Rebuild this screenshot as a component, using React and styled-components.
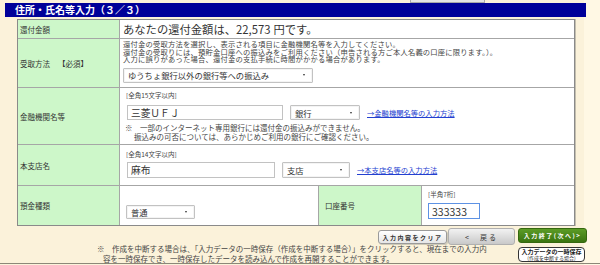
import React from 'react';
import styled, { createGlobalStyle } from 'styled-components';

const Global = createGlobalStyle`
  html, body { margin: 0; padding: 0; }
  body {
    width: 600px;
    height: 265px;
    overflow: hidden;
    background: linear-gradient(to right, #fbf2da 0, #fbf2da 584px, #fff8e4 584px);
    font-family: "Noto Sans CJK JP", "Noto Sans", sans-serif;
    color: #333;
  }
`;

const Page = styled.div`
  width: 600px;
  height: 264px;
  box-sizing: border-box;
  border-bottom: 1px solid #8c8878;
  display: flex;
  flex-direction: column;
`;

const TopStrip = styled.div`
  height: 3px;
  display: flex;
`;

const CutButton = styled.div`
  margin-left: 410px;
  width: 75px;
  height: 3px;
  box-sizing: border-box;
  background: #e4e4e4;
  border: 1px solid #a8a8a8;
  border-top: none;
`;

const TitleBar = styled.div`
  margin-left: 5px;
  width: 581px;
  height: 14px;
  box-sizing: border-box;
  padding-left: 10px;
  background: #000099;
  color: #fff;
  font-size: 10px;
  font-weight: bold;
  line-height: 14px;
  white-space: nowrap;
`;

const Table = styled.div`
  margin-top: 2px;
  margin-left: 17px;
  width: 558px;
  box-sizing: border-box;
  border: 1px solid #8a8a8a;
  box-shadow: 1px 0 0 #c4bfae;
  background: #fff;
  display: flex;
  flex-direction: column;
`;

const Row = styled.div`
  display: flex;
  height: ${p => p.$h}px;
  box-sizing: border-box;
  border-bottom: ${p => (p.$last ? 'none' : '1px solid #a6a6a6')};
`;

const Label = styled.div`
  width: ${p => p.$w || 102}px;
  flex: none;
  box-sizing: border-box;
  border-right: 1px solid #a6a6a6;
  background: #cdf7c9;
  display: flex;
  align-items: center;
  padding-left: ${p => p.$pl || 2}px;
  font-size: 7.5px;
  line-height: 9px;
  white-space: nowrap;
  color: #333;
`;

const Required = styled.span`
  margin-left: 8px;
`;

const Cell = styled.div`
  flex: ${p => (p.$w ? 'none' : '1')};
  width: ${p => (p.$w ? `${p.$w}px` : 'auto')};
  box-sizing: border-box;
  border-right: ${p => (p.$divider ? '1px solid #a6a6a6' : 'none')};
  padding-left: ${p => p.$pl ?? 3}px;
  padding-top: ${p => p.$pt ?? 0}px;
  display: flex;
  flex-direction: column;
  justify-content: ${p => (p.$center ? 'center' : 'flex-start')};
  align-items: flex-start;
`;

const Amount = styled.div`
  font-size: 11.3px;
  line-height: 14px;
  color: #333;
  white-space: nowrap;
`;

const Yen = styled.span`
  margin-left: 3px;
`;

const Desc = styled.div`
  font-size: 7.3px;
  line-height: 7.5px;
  height: 7.5px;
  color: #444;
  white-space: nowrap;
  letter-spacing: 0.2px;
`;

const Hint = styled.div`
  font-size: 6.5px;
  line-height: 8px;
  color: #444;
  margin-left: ${p => p.$ml || 0}px;
  white-space: nowrap;
`;

const Line = styled.div`
  display: flex;
  align-items: center;
  margin-top: ${p => p.$mt || 0}px;
  margin-left: ${p => p.$ml || 0}px;
`;

const SelectBox = styled.div`
  position: relative;
  flex: none;
  width: ${p => p.$w}px;
  height: ${p => p.$h || 15}px;
  margin-left: ${p => p.$ml || 0}px;
  margin-top: ${p => p.$mt || 0}px;
  box-sizing: border-box;
  border: 1px solid #c2c2c2;
  border-radius: 1px;
  background: #fff;
  padding-left: 4px;
  display: flex;
  align-items: center;
  font-size: 8.3px;
  color: #333;
  white-space: nowrap;
  box-shadow: inset 0 0 0 1px #f4f4f4;
`;

const Arrow = styled.span`
  position: absolute;
  right: 7px;
  top: 50%;
  transform: translateY(-50%);
  width: 0;
  height: 0;
  border-left: 1.6px solid transparent;
  border-right: 1.6px solid transparent;
  border-top: 2.6px solid #333;
`;

const TextInput = styled.input`
  width: ${p => p.$w}px;
  height: ${p => p.$h || 15}px;
  box-sizing: border-box;
  margin: 0;
  margin-top: ${p => p.$mt || 0}px;
  padding: 0 3px;
  border: 1px solid ${p => (p.$focus ? '#5d92e4' : '#c2c2c2')};
  background: #fff;
  font-family: "Noto Sans CJK JP", sans-serif;
  font-size: ${p => p.$fs || 9.7}px;
  color: #333;
  outline: none;
`;

const Link = styled.a`
  margin-left: 7px;
  font-size: 7.3px;
  color: #2340d0;
  text-decoration: underline;
  white-space: nowrap;
`;

const Note = styled.div`
  font-size: 7.5px;
  line-height: 9px;
  color: #444;
  white-space: nowrap;
  margin-top: ${p => p.$mt || 0}px;
  padding-left: ${p => p.$pl || 0}px;
`;

const ButtonRow = styled.div`
  display: flex;
  justify-content: flex-end;
  align-items: flex-start;
  height: 17px;
  margin-top: 2px;
  padding-right: 13px;
`;

const Btn = styled.div`
  width: ${p => p.$w}px;
  height: ${p => p.$h}px;
  margin-top: ${p => p.$mt || 0}px;
  margin-left: ${p => p.$ml || 0}px;
  box-sizing: border-box;
  display: flex;
  align-items: center;
  justify-content: center;
  border-radius: 3px;
  font-size: 6px;
  font-weight: bold;
  letter-spacing: 1.5px;
  white-space: nowrap;
  ${p =>
    p.$kind === 'clear' &&
    `background: linear-gradient(#ffffff, #e6e6e6);
     border: 1px solid #9a9a9a;
     color: #333;
     box-shadow: 1px 1px 0 #cfcab8;`}
  ${p =>
    p.$kind === 'back' &&
    `background: linear-gradient(#f2f2f2, #c9c9c9);
     border: 1px solid #b0b0b0;
     color: #333;
     font-weight: normal;
     font-size: 7px;
     letter-spacing: 2px;`}
  ${p =>
    p.$kind === 'next' &&
    `background: linear-gradient(#5c9c26, #3a7410);
     border: 1px solid #35680f;
     color: #fff;`}
`;

const BottomRow = styled.div`
  display: flex;
  align-items: flex-start;
  height: 18px;
  padding-right: 15px;
`;

const FooterNote = styled.div`
  margin-left: 103px;
  margin-top: -1px;
  text-indent: -6px;
  font-size: 7.5px;
  line-height: 9.5px;
  color: #444;
  white-space: nowrap;
`;

const SaveBtn = styled.div`
  margin-left: auto;
  margin-top: 2px;
  width: 67px;
  height: 15px;
  box-sizing: border-box;
  border: 1px solid #333;
  border-radius: 4px;
  background: #fff;
  display: flex;
  flex-direction: column;
  align-items: center;
  justify-content: center;
  color: #222;
  white-space: nowrap;
`;

const SaveMain = styled.span`
  font-size: 6px;
  font-weight: bold;
  line-height: 6.5px;
`;

const SaveSub = styled.span`
  font-size: 5px;
  line-height: 5.5px;
`;

const Dropdown = ({ w, h, ml, mt, value }) => (
  <SelectBox role="combobox" $w={w} $h={h} $ml={ml} $mt={mt}>
    {value}
    <Arrow />
  </SelectBox>
);

export default function App() {
  return (
    <>
      <Global />
      <Page>
        <TopStrip>
          <CutButton />
        </TopStrip>
        <TitleBar>住所・氏名等入力（３／３）</TitleBar>
        <Table>
          <Row $h={19}>
            <Label>還付金額</Label>
            <Cell $center>
              <Amount>
                あなたの還付金額は、22,573<Yen>円です。</Yen>
              </Amount>
            </Cell>
          </Row>
          <Row $h={49}>
            <Label>
              受取方法<Required>【必須】</Required>
            </Label>
            <Cell $pt={2}>
              <Desc>還付金の受取方法を選択し、表示される項目に金融機関名等を入力してください。</Desc>
              <Desc>還付金の受取りには、預貯金口座への振込みをご利用ください（申告される方ご本人名義の口座に限ります。）。</Desc>
              <Desc>入力に誤りがあった場合、還付金の支払手続に時間がかかる場合があります。</Desc>
              <Dropdown w={190} h={15} mt={4} value="ゆうちょ銀行以外の銀行等への振込み" />
            </Cell>
          </Row>
          <Row $h={57}>
            <Label>金融機関名等</Label>
            <Cell $pt={3}>
              <Hint $ml={3}>[全角15文字以内]</Hint>
              <Line $mt={6} $ml={4}>
                <TextInput $w={156} $h={15} defaultValue="三菱ＵＦＪ" />
                <Dropdown w={70} h={15} ml={7} value="銀行" />
                <Link href="#">→金融機関名等の入力方法</Link>
              </Line>
              <Note $mt={3} $pl={2}>※　一部のインターネット専用銀行には還付金の振込みができません。</Note>
              <Note $pl={11}>振込みの可否については、あらかじめご利用の銀行にご確認ください。</Note>
            </Cell>
          </Row>
          <Row $h={41}>
            <Label>本支店名</Label>
            <Cell $pt={5}>
              <Hint $ml={3}>[全角14文字以内]</Hint>
              <Line $mt={4} $ml={4}>
                <TextInput $w={148} $h={16} defaultValue="麻布" />
                <Dropdown w={68} h={16} ml={7} value="支店" />
                <Link href="#">→本支店名等の入力方法</Link>
              </Line>
            </Cell>
          </Row>
          <Row $h={39} $last>
            <Label>預金種類</Label>
            <Cell $w={199} $divider $pl={6} $pt={19}>
              <Dropdown w={69} h={14} value="普通" />
            </Cell>
            <Label $w={103} $pl={6}>口座番号</Label>
            <Cell $pl={6} $pt={4}>
              <Hint>[半角7桁]</Hint>
              <TextInput $w={52} $h={16} $mt={5} $fs={10.5} $focus defaultValue="333333" />
            </Cell>
          </Row>
        </Table>
        <ButtonRow>
          <Btn $kind="clear" $w={69} $h={14} $mt={2}>入力内容をクリア</Btn>
          <Btn $kind="back" $w={67} $h={17} $ml={1}>&lt;　戻る</Btn>
          <Btn $kind="next" $w={69} $h={15} $ml={3}>入力終了(次へ)&gt;</Btn>
        </ButtonRow>
        <BottomRow>
          <FooterNote>
            ※　作成を中断する場合は、「入力データの一時保存（作成を中断する場合）」をクリックすると、現在までの入力内
            <br />
            容を一時保存でき、一時保存したデータを読み込んで作成を再開することができます。
          </FooterNote>
          <SaveBtn>
            <SaveMain>入力データの一時保存</SaveMain>
            <SaveSub>(作成を中断する場合)</SaveSub>
          </SaveBtn>
        </BottomRow>
      </Page>
    </>
  );
}
